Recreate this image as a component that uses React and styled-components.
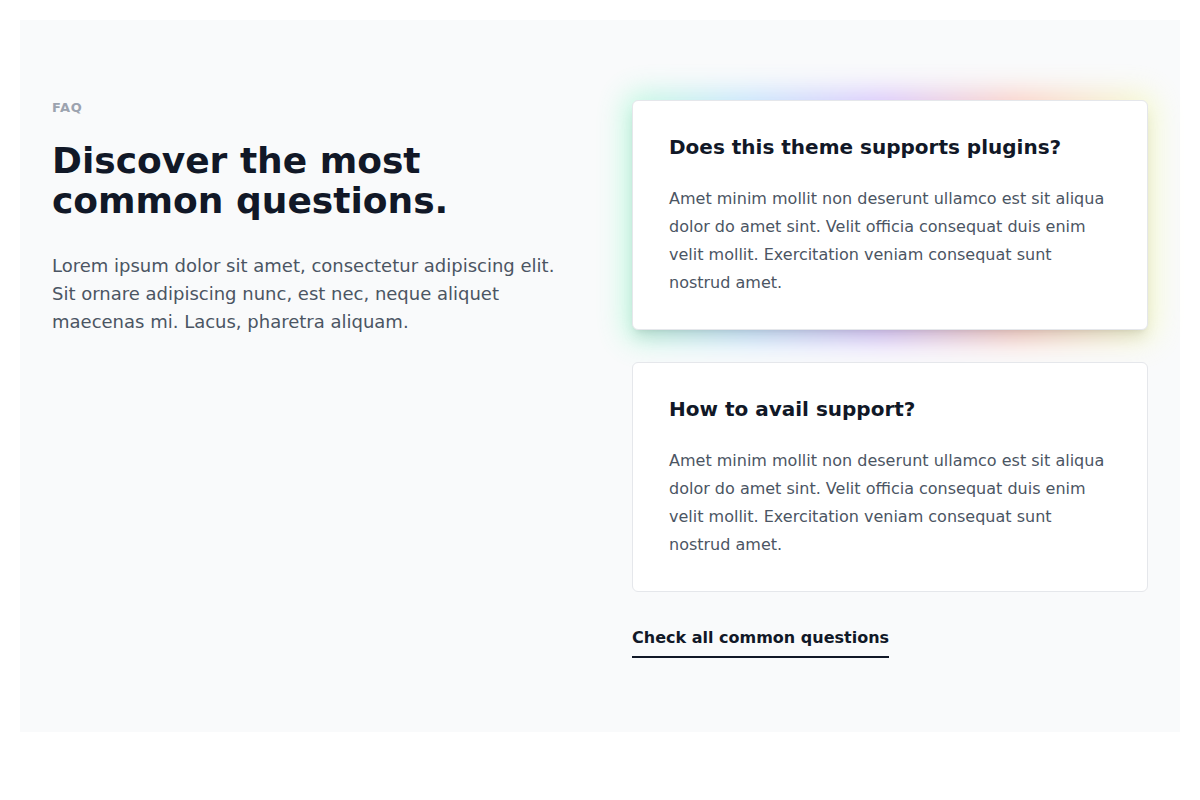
import styled, { createGlobalStyle } from "styled-components";

const GlobalStyle = createGlobalStyle`
  * { box-sizing: border-box; }
  body {
    margin: 0;
    background: #fff;
    font-family: "DejaVu Sans", "Noto Sans", sans-serif;
  }
`;

const Page = styled.div`
  padding: 20px;
`;

const Section = styled.section`
  background: #f9fafb;
  padding: 80px 32px 74px;
`;

const Grid = styled.div`
  display: grid;
  grid-template-columns: 1fr 1fr;
  column-gap: 64px;
  align-items: start;
`;

const Eyebrow = styled.p`
  margin: 0;
  font-size: 13px;
  line-height: 16px;
  font-weight: 700;
  letter-spacing: 0.6px;
  text-transform: uppercase;
  color: #9ca3af;
`;

const Title = styled.h2`
  margin: 25px 0 0;
  font-size: 36px;
  line-height: 40px;
  font-weight: 700;
  color: #111827;
`;

const Lead = styled.p`
  margin: 31px 0 0;
  font-size: 18px;
  line-height: 28px;
  color: #4b5563;
`;

const Stack = styled.div`
  display: flex;
  flex-direction: column;
  gap: 32px;
`;

const CardWrap = styled.div`
  position: relative;
`;

const Glow = styled.div`
  position: absolute;
  inset: -8px -8px -12px;
  border-radius: 16px;
  background: linear-gradient(
    90deg,
    #44ff9a -0.55%,
    #44b0ff 22.86%,
    #8b44ff 48.36%,
    #ff6644 73.33%,
    #ebff70 99.34%
  );
  opacity: 0.3;
  filter: blur(14px);
`;

const Card = styled.div`
  position: relative;
  background: #fff;
  border: 1px solid #e5e7eb;
  border-radius: 6px;
  padding: 32px 36px 32px;
  box-shadow: ${({ $raised }) =>
    $raised
      ? "0 10px 15px -3px rgba(0,0,0,0.1), 0 4px 6px -4px rgba(0,0,0,0.1)"
      : "none"};
`;

const Question = styled.h3`
  margin: 0;
  font-size: 20px;
  line-height: 28px;
  font-weight: 700;
  color: #111827;
`;

const Answer = styled.p`
  margin: 24px 0 0;
  font-size: 16px;
  line-height: 28px;
  color: #4b5563;
`;

const LinkRow = styled.div`
  margin-top: 34px;
`;

const MoreLink = styled.a`
  display: inline-block;
  font-size: 16px;
  line-height: 24px;
  font-weight: 700;
  color: #111827;
  text-decoration: none;
  padding-bottom: 6px;
  border-bottom: 2px solid #111827;
`;

const answer =
  "Amet minim mollit non deserunt ullamco est sit aliqua dolor do amet sint. Velit officia consequat duis enim velit mollit. Exercitation veniam consequat sunt nostrud amet.";

const faqs = [
  { q: "Does this theme supports plugins?", a: answer, featured: true },
  { q: "How to avail support?", a: answer },
];

const App = () => (
  <Page>
    <GlobalStyle />
    <Section>
      <Grid>
        <div>
          <Eyebrow>FAQ</Eyebrow>
          <Title>Discover the most common questions.</Title>
          <Lead>
            Lorem ipsum dolor sit amet, consectetur adipiscing elit. Sit ornare
            adipiscing nunc, est nec, neque aliquet maecenas mi. Lacus, pharetra
            aliquam.
          </Lead>
        </div>
        <div>
          <Stack>
            {faqs.map((f) => (
              <CardWrap key={f.q}>
                {f.featured && <Glow />}
                <Card $raised={f.featured}>
                  <Question>{f.q}</Question>
                  <Answer>{f.a}</Answer>
                </Card>
              </CardWrap>
            ))}
          </Stack>
          <LinkRow>
            <MoreLink href="#">Check all common questions</MoreLink>
          </LinkRow>
        </div>
      </Grid>
    </Section>
  </Page>
);

export default App;
